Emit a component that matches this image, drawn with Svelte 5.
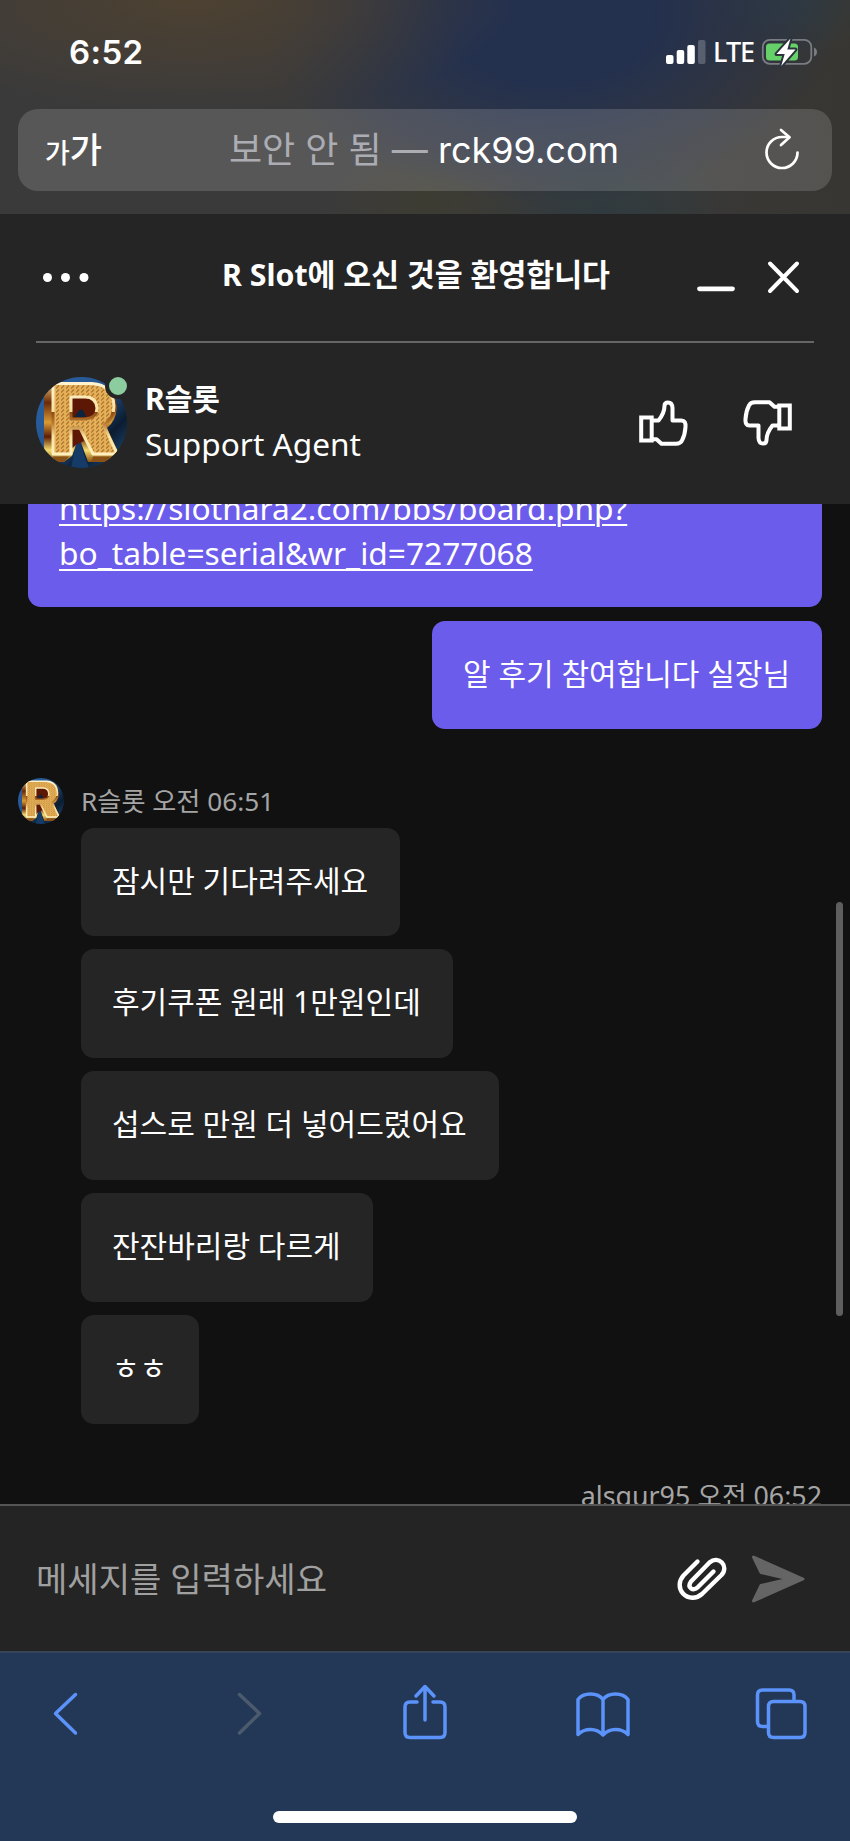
<script>
  const replies = [
    '잠시만 기다려주세요',
    '후기쿠폰 원래 1만원인데',
    '섭스로 만원 더 넣어드렸어요',
    '잔잔바리랑 다르게',
    'ㅎㅎ'
  ];
</script>

{#snippet logo(id, size)}
  <svg class="logo" width={size} height={size} viewBox="0 0 91 91">
    <defs>
      <clipPath id="{id}-clip"><circle cx="45.5" cy="45.5" r="45.5" /></clipPath>
      <linearGradient id="{id}-bg" x1="0" y1="0" x2="1" y2="1">
        <stop offset="0" stop-color="#2d62a4" />
        <stop offset=".45" stop-color="#245590" />
        <stop offset=".72" stop-color="#0b1c30" />
        <stop offset="1" stop-color="#24558c" />
      </linearGradient>
      <linearGradient id="{id}-side" x1="0" y1="0" x2="0" y2="1">
        <stop offset="0" stop-color="#f0c878" />
        <stop offset=".25" stop-color="#6a2a08" />
        <stop offset=".5" stop-color="#d99a35" />
        <stop offset=".68" stop-color="#5c1d06" />
        <stop offset=".85" stop-color="#f6dc6c" />
        <stop offset="1" stop-color="#8a5216" />
      </linearGradient>
      <linearGradient id="{id}-rim" x1="0" y1="0" x2="0" y2="1">
        <stop offset="0" stop-color="#fff3cf" />
        <stop offset=".4" stop-color="#f6dfa0" />
        <stop offset=".41" stop-color="#8a4a16" />
        <stop offset=".56" stop-color="#b97a30" />
        <stop offset=".75" stop-color="#f7e2a0" />
        <stop offset="1" stop-color="#fff0c0" />
      </linearGradient>
      <pattern id="{id}-weave" width="5" height="4" patternUnits="userSpaceOnUse">
        <rect width="5" height="4" fill="#e6b058" />
        <path d="M0 3.5L3 .5" stroke="#a9742e" stroke-width="1.200" />
      </pattern>
    </defs>
    <g clip-path="url(#{id}-clip)">
      <rect width="91" height="91" fill="url(#{id}-bg)" />
      <path d="M8 16L18 6H60Q79 9 81 30Q80 44 71 51L84 79L76 85H52L43 60L36 79L28 85H14L8 78Z" fill="url(#{id}-side)" />
      <path d="M35 20H54Q61 24 61 32Q60 42 50 43H35Z" fill="#5c1804" />
      <path d="M40 38Q46 26 50 40H38Z" fill="#0c2440" />
      <path d="M35 53H44L48 64L40 68L35 72Z" fill="#5c1804" />
      <path d="M35 91L40 68L44 66L53 91Z" fill="#153b66" />
      <path fill-rule="evenodd" d="M17 6.500H56Q77 8 78 29Q78 41 68 48L81 77H57L44 51H35V77H17ZM35 20V42H49Q61 41 61 31Q60 20 49 20Z" fill="url(#{id}-weave)" stroke="url(#{id}-rim)" stroke-width="3" stroke-linejoin="round" />
      <path d="M17 79.500H33L28 85H15ZM57 79.500H82L76 85H55Z" fill="#8a5216" />
    </g>
  </svg>
{/snippet}

<main>
  <div class="browser-top">
    <div class="status">
      <span class="time">6:52</span>
      <div class="signals">
        <svg width="40" height="26" viewBox="0 0 40 26">
          <rect x="0" y="16" width="7.5" height="9" rx="2" fill="#fff" />
          <rect x="10.7" y="11" width="7.5" height="14" rx="2" fill="#fff" />
          <rect x="21.3" y="6" width="7.5" height="19" rx="2" fill="#fff" />
          <rect x="32" y="1" width="7.5" height="24" rx="2" fill="#fff" opacity=".22" />
        </svg>
        <span class="lte">LTE</span>
        <svg width="58" height="30" viewBox="0 0 58 30">
          <rect x="1.8" y="2.8" width="48.5" height="24" rx="7" fill="none" stroke="#797c83" stroke-width="1.8" />
          <path d="M53 10.5q3 1.5 3 4.5t-3 4.5z" fill="#797c83" />
          <rect x="5" y="6.5" width="32" height="17" rx="3.5" fill="#65d168" />
          <path d="M29.500 1.500L15.500 17h8.200l-3.500 12L34.500 12.500h-8.200z" fill="#fff" stroke="#2c333d" stroke-width="4" stroke-linejoin="round" paint-order="stroke" />
        </svg>
      </div>
    </div>
    <div class="url-bar">
      <span class="text-size"><small>가</small>가</span>
      <p class="address"><span>보안 안 됨 —</span> rck99.com</p>
      <svg class="reload" width="38" height="44" viewBox="0 0 38 44" fill="none" stroke="#fff" stroke-width="2.7" stroke-linecap="round" stroke-linejoin="round">
        <path d="M34.5 25.500A15.500 15.500 0 1 1 19 10H26" />
        <path d="M18 3L26.500 10.300L18 18" />
      </svg>
    </div>
  </div>

  <header>
    <div class="title-row">
      <svg class="dots" width="46" height="10" viewBox="0 0 46 10" fill="#fff">
        <circle cx="4.500" cy="4.500" r="4.500" />
        <circle cx="22.500" cy="4.500" r="4.500" />
        <circle cx="41" cy="4.500" r="4.500" />
      </svg>
      <h1>R Slot에 오신 것을 환영합니다</h1>
      <svg class="window" width="104" height="34" viewBox="0 0 104 34" stroke="#fff" stroke-linecap="round">
        <path d="M2.500 27.800H35.500" stroke-width="4.800" />
        <path d="M73 2.500L100 30M100 2.500L73 30" stroke-width="4" />
      </svg>
    </div>
    <div class="agent">
      <div class="avatar">
        {@render logo('big', 91)}
        <i class="online"></i>
      </div>
      <div class="who">
        <strong>R슬롯</strong>
        <span>Support Agent</span>
      </div>
      <svg class="thumb" width="50" height="48" viewBox="0 0 50 48" fill="none" stroke="#fff" stroke-width="4" stroke-linejoin="round">
        <path d="M3.200 18.500H13.700V41.500H3.200Z" stroke-linejoin="miter" />
        <path d="M14 21.500H20.500Q26.500 14 26.500 7Q26.500 3.500 30 3.500Q34.200 3.500 34.500 9V21.500H43.500Q48 21.500 47.500 28Q47 36 44 41.500Q42.500 44.800 38 44.800H23.500L18.500 40.200H14" />
      </svg>
      <svg class="thumb down" width="50" height="48" viewBox="0 0 50 48" fill="none" stroke="#fff" stroke-width="4" stroke-linejoin="round">
        <path d="M3.200 18.500H13.700V41.500H3.200Z" stroke-linejoin="miter" />
        <path d="M14 21.500H20.500Q26.500 14 26.500 7Q26.500 3.500 30 3.500Q34.200 3.500 34.500 9V21.500H43.500Q48 21.500 47.500 28Q47 36 44 41.500Q42.500 44.800 38 44.800H23.500L18.500 40.200H14" />
      </svg>
    </div>
  </header>

  <section class="chat">
    <div class="bubble mine link">
      <span>https://slothara2.com/bbs/board.php?<br />bo_table=serial&amp;wr_id=7277068</span>
    </div>
    <div class="bubble mine">알 후기 참여합니다 실장님</div>
    <div class="sender">
      {@render logo('small', 46)}
      <span>R슬롯 오전 06:51</span>
    </div>
    <div class="replies">
      {#each replies as reply}
        <div class="bubble">{reply}</div>
      {/each}
    </div>
    <div class="my-name">alsgur95 오전 06:52</div>
    <div class="scrollbar"></div>
  </section>

  <div class="composer">
    <span>메세지를 입력하세요</span>
    <svg class="clip" width="50" height="44" viewBox="0 0 50 44" fill="none" stroke="#fff" stroke-width="4.400" stroke-linecap="round" stroke-linejoin="round">
      <path d="M20.500 4.500L6.500 18.500C1.500 24 1.500 31.500 6 36.500C11 42 19.500 42 25 37L44.500 18C52.500 9 41.500-2 32.500 5.500L14 24.500C9.500 31 16.500 34.500 20.500 30.500L36.500 14.500" />
    </svg>
    <svg class="send" width="54" height="50" viewBox="0 0 54 50" fill="#656565" stroke="#656565" stroke-width="3" stroke-linejoin="round">
      <path d="M2.500 3L52 25L2.500 47L10 31.500L38 25L10 18.500Z" />
    </svg>
  </div>

  <nav>
    <div class="tools">
      <svg width="28" height="56" viewBox="0 0 28 56"><path d="M23.500 8.500L3.500 27.500L23.500 47" /></svg>
      <svg class="off" width="28" height="56" viewBox="0 0 28 56"><path d="M3.500 8.500L23.500 27.500L3.500 47" /></svg>
      <svg class="share" width="46" height="56" viewBox="0 0 46 56"><path d="M15 16H8Q3 16 3 21V46.500Q3 51.500 8 51.500H38Q43 51.500 43 46.500V21Q43 16 38 16H31M23 34V1.500M14 10L23 0.500L32 10" /></svg>
      <svg class="book" width="56" height="56" viewBox="0 0 56 56"><path d="M28 13.500Q24 8 15.500 8Q7 8 3 13.500V48.500Q8 43.500 15.500 43.500Q23 43.500 28 49Q33 43.500 40.500 43.500Q48 43.500 53 48.500V13.500Q49 8 40.500 8Q32 8 28 13.500V48" /></svg>
      <svg class="tabs" width="52" height="56" viewBox="0 0 52 56"><path d="M12.500 40.500H7.500Q2.500 40.500 2.500 35.500V9Q2.500 4 7.500 4H34Q39 4 39 9V15M18 15.500H45Q50 15.500 50 20.500V46.500Q50 51.500 45 51.500H18.500Q13.500 51.500 13.500 46.500V20.500Q13.500 15.500 18.500 15.500Z" /></svg>
    </div>
    <div class="home"></div>
  </nav>
</main>

<style>
  :global(body) {
    margin: 0;
    background: #111;
  }

  main {
    width: 850px;
    height: 1841px;
    overflow: hidden;
    display: flex;
    flex-direction: column;
    color: #fff;
    font-family: "Noto Sans", "Noto Sans CJK KR", sans-serif;
    font-size: 30px;
  }

  svg {
    display: block;
    flex: none;
    overflow: visible;
  }

  .browser-top {
    box-sizing: border-box;
    height: 214px;
    padding: 0 18px;
    background:
      radial-gradient(ellipse 330px 115px at 190px 0, #4d4131, transparent),
      radial-gradient(ellipse 290px 190px at 550px 15px, #23304e 35%, transparent),
      radial-gradient(ellipse 90px 60px at 790px 0, #303b40, transparent),
      radial-gradient(ellipse 110px 60px at 430px 200px, #3d3c32, transparent),
      radial-gradient(ellipse 130px 90px at 605px 214px, #303b3f, transparent),
      linear-gradient(90deg, #3a3a3b 60%, #383632);
  }

  .status {
    height: 109px;
    display: flex;
    justify-content: space-between;
    font-family: Inter, sans-serif;
  }

  .time {
    margin: 32px 0 0 51px;
    font-size: 33px;
    line-height: 40px;
    font-weight: 600;
    letter-spacing: 0.4px;
  }

  .signals {
    display: flex;
    align-items: center;
    height: 30px;
    margin: 37px 13px 0 0;
  }

  .lte {
    width: 48px;
    margin-left: 7px;
    font: 500 27px/30px "Noto Sans", sans-serif;
    letter-spacing: -1px;
  }

  .url-bar {
    height: 82px;
    border-radius: 20px;
    background: rgba(255, 255, 255, 0.15);
    display: flex;
    align-items: center;
  }

  .text-size {
    width: 184px;
    padding-left: 27px;
    font: 500 35px/40px "Noto Sans CJK KR", sans-serif;
    white-space: nowrap;
  }

  .text-size small {
    font-size: 27px;
  }

  .address {
    margin: 0;
    width: 500px;
    font: 36px/40px Inter, "Noto Sans CJK KR", sans-serif;
    white-space: nowrap;
  }

  .address span {
    color: #acacb3;
  }

  .reload {
    margin: -3px 0 0 34px;
  }

  header {
    box-sizing: border-box;
    height: 290px;
    padding: 0 36px;
    background: #252525;
  }

  .title-row {
    box-sizing: border-box;
    height: 129px;
    border-bottom: 2px solid #666;
    display: flex;
    align-items: center;
  }

  .dots {
    margin: 0 0 0 7px;
  }

  h1 {
    width: 475px;
    margin: -6px 0 0 133px;
    font-size: 30.300px;
    line-height: 40px;
    font-weight: 700;
    white-space: nowrap;
  }

  .agent {
    height: 161px;
    display: flex;
    align-items: center;
    padding-bottom: 2px;
  }

  .avatar {
    position: relative;
    margin-top: -2px;
  }

  .online {
    position: absolute;
    top: -4px;
    right: -4px;
    width: 18px;
    height: 18px;
    border: 4px solid #252525;
    border-radius: 50%;
    background: #8bcd9f;
  }

  .who {
    width: 493px;
    margin-top: -5px;
    padding-left: 18px;
    display: flex;
    flex-direction: column;
    line-height: 45px;
  }

  .who span {
    font-size: 31.600px;
  }

  .thumb {
    margin-top: -1px;
  }

  .thumb.down {
    margin-left: 55px;
    transform: rotate(180deg);
  }

  .chat {
    position: relative;
    height: 1000px;
    overflow: hidden;
    background: #111;
    display: flex;
    flex-direction: column;
  }

  .bubble {
    box-sizing: border-box;
    height: 108.500px;
    padding: 31px 32px 32px 31px;
    border-radius: 13px;
    background: #252525;
    font-size: 30px;
    line-height: 44px;
    white-space: nowrap;
  }

  .mine {
    align-self: flex-end;
    flex: none;
    margin-right: 28px;
    background: #6c5ceb;
  }

  .link {
    width: 794px;
    height: 153px;
    margin: -50px 28px 13.500px 0;
    font-size: 31.700px;
    line-height: 45px;
    text-decoration: underline;
    text-decoration-thickness: 2px;
    text-underline-offset: 4px;
  }

  .sender {
    display: flex;
    align-items: center;
    margin: 49px 0 3.500px 18px;
    color: #a5a5a5;
    font-size: 26.200px;
    line-height: 46px;
    gap: 17px;
  }

  .replies {
    display: flex;
    flex-direction: column;
    align-items: flex-start;
    gap: 13.400px;
    margin-left: 81px;
  }

  .my-name {
    margin: 53px 28px 0;
    text-align: right;
    color: #a5a5a5;
    font-size: 26.800px;
    line-height: 38px;
  }

  .scrollbar {
    position: absolute;
    top: 398px;
    right: 7px;
    width: 7px;
    height: 414px;
    border-radius: 4px;
    background: #5e5e5e;
  }

  .composer {
    box-sizing: border-box;
    height: 147px;
    padding-left: 36px;
    border-top: 2px solid #555;
    background: #242424;
    display: flex;
    align-items: center;
    color: #a0a0a0;
    font-size: 34.100px;
  }

  .composer span {
    width: 641px;
    margin-top: -4px;
  }

  .send {
    margin-left: 24px;
  }

  nav {
    height: 190px;
    background: #233857;
    box-shadow: inset 0 2px #364359;
  }

  .tools {
    display: flex;
    padding: 35px 0 0 52px;
  }

  .tools svg {
    fill: none;
    stroke: #5b93fa;
    stroke-width: 3.500;
    stroke-linecap: round;
    stroke-linejoin: round;
  }

  .tools .off {
    margin-left: 156px;
    stroke: #4b5a6d;
  }

  .share {
    margin-left: 138px;
  }

  .book {
    margin-left: 127px;
  }

  .tabs {
    margin-left: 124px;
  }

  .home {
    width: 304px;
    height: 12px;
    margin: 69px auto 0;
    border-radius: 6px;
    background: #fff;
  }
</style>
